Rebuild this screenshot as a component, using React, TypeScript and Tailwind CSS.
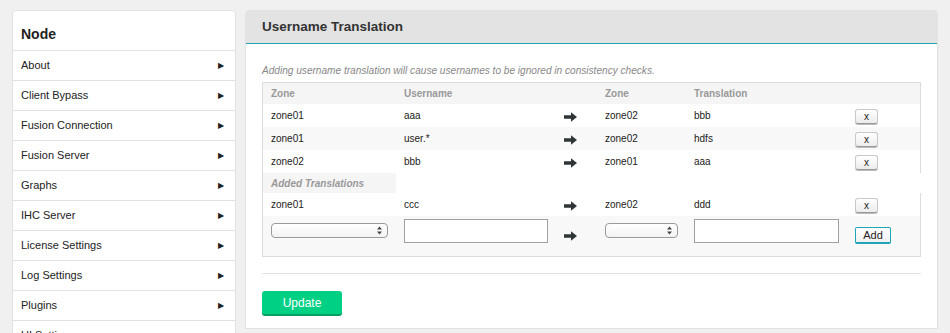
import React from "react";

const navItems = [
  "About",
  "Client Bypass",
  "Fusion Connection",
  "Fusion Server",
  "Graphs",
  "IHC Server",
  "License Settings",
  "Log Settings",
  "Plugins",
  "UI Settings",
];

const existing = [
  { zone: "zone01", user: "aaa", to: "zone02", tr: "bbb" },
  { zone: "zone01", user: "user.*", to: "zone02", tr: "hdfs" },
  { zone: "zone02", user: "bbb", to: "zone01", tr: "aaa" },
];

const cols = "grid grid-cols-[133px_160px_41px_89px_161px_1fr]";

function Arrow() {
  return (
    <svg width="13" height="10" viewBox="0 0 13 10" className="text-[#2f3537]">
      <path d="M0 3.3h7V0.2l6 4.8-6 4.8V6.7H0z" fill="currentColor" />
    </svg>
  );
}

function XButton() {
  return (
    <button className="w-[23px] h-[15px] rounded-[3px] border border-[#c8c8c8] border-b-[#999] bg-gradient-to-b from-white to-[#ececec] text-[10px] leading-none text-[#222] shadow-[0_1px_0_#bbb]">
      x
    </button>
  );
}

function FakeSelect({ w }: { w: string }) {
  return (
    <div
      className={`${w} h-[15px] rounded-[4px] border border-[#9a9a9a] bg-gradient-to-b from-white to-[#f3f3f3] flex items-center justify-end pr-[5px]`}
    >
      <svg width="5" height="9" viewBox="0 0 5 9">
        <path d="M2.5 0.5L5 3.5H0z M2.5 8.5L0 5.5h5z" fill="#444" />
      </svg>
    </div>
  );
}

function Row({
  r,
  shaded,
}: {
  r: { zone: string; user: string; to: string; tr: string };
  shaded?: boolean;
}) {
  return (
    <div
      className={`${cols} h-[23px] items-center border-r border-[#dcdcdc] ${
        shaded ? "bg-[#f8f8f8]" : "bg-white"
      }`}
    >
      <div className="pl-[8px]">{r.zone}</div>
      <div className="pl-[8px]">{r.user}</div>
      <div className="pl-[8px] pt-[2px]">
        <Arrow />
      </div>
      <div className="pl-[8px]">{r.to}</div>
      <div className="pl-[8px]">{r.tr}</div>
      <div className="pl-[8px] pt-[2px]">
        <XButton />
      </div>
    </div>
  );
}

export default function App() {
  return (
    <div
      className="w-[950px] h-[333px] overflow-hidden bg-[#f0f0f0] flex gap-[9px] pl-[12px] pt-[10px] text-[#222]"
      style={{ fontFamily: '"Liberation Sans", Arial, sans-serif' }}
    >
      {/* sidebar */}
      <aside className="w-[224px] shrink-0 bg-white border border-[#e2e2e2] rounded-t-[4px] self-start">
        <div className="h-[40px] px-[8px] pt-[13px] text-[14px] font-bold border-b border-[#e2e2e2]">
          Node
        </div>
        {navItems.map((item) => (
          <div
            key={item}
            className="h-[30px] px-[8px] flex items-center justify-between text-[11px] border-b border-[#e2e2e2]"
          >
            <span>{item}</span>
            <span className="text-[8px] text-[#222] mr-[3px]">▶</span>
          </div>
        ))}
      </aside>

      {/* main panel */}
      <section className="w-[693px] shrink-0 self-start bg-white border border-[#e2e2e2] rounded-t-[4px]">
        <header className="h-[33px] bg-[#e3e3e3] border-b border-[#1fa5b6] px-[16px] flex items-center">
          <h1 className="text-[13.5px] font-bold text-[#333]">Username Translation</h1>
        </header>

        <div className="px-[16px] pt-[19px] pb-[12px]">
          <p className="text-[10.1px] italic text-[#888] mb-[4px]">
            Adding username translation will cause usernames to be ignored in consistency checks.
          </p>

          <div className="text-[10px] border-l border-t border-b border-[#dcdcdc]">
            <div className={`${cols} h-[21px] items-center bg-[#f5f5f5] border-r border-[#dcdcdc] font-bold text-[#999]`}>
              <div className="pl-[8px]">Zone</div>
              <div className="pl-[8px]">Username</div>
              <div />
              <div className="pl-[8px]">Zone</div>
              <div className="pl-[8px]">Translation</div>
              <div />
            </div>
            {existing.map((r, i) => (
              <Row key={i} r={r} shaded={i === 1} />
            ))}
            <div className={`${cols} h-[20px] items-center`}>
              <div className="pl-[8px] h-full flex items-center bg-[#f5f5f5] font-bold italic text-[#999]">
                Added Translations
              </div>
            </div>
            <Row r={{ zone: "zone01", user: "ccc", to: "zone02", tr: "ddd" }} />
            <div className={`${cols} h-[40px] bg-[#f8f8f8] border-r border-[#dcdcdc]`}>
              <div className="pl-[8px] pt-[7px]">
                <FakeSelect w="w-[117px]" />
              </div>
              <div className="pl-[8px] pt-[3px]">
                <div className="w-[144px] h-[24px] bg-white border border-[#a0a0a0]" />
              </div>
              <div className="pl-[8px] pt-[15px]">
                <Arrow />
              </div>
              <div className="pl-[8px] pt-[7px]">
                <FakeSelect w="w-[73px]" />
              </div>
              <div className="pl-[8px] pt-[3px]">
                <div className="w-[145px] h-[24px] bg-white border border-[#a0a0a0]" />
              </div>
              <div className="pl-[8px] pt-[11px]">
                <button className="w-[36px] h-[17px] rounded-[2px] border border-[#1fa5b6] border-b-2 bg-gradient-to-b from-white to-[#f0f0f0] text-[11px] leading-none text-[#222]">
                  Add
                </button>
              </div>
            </div>
          </div>

          <div className="border-t border-[#e2e2e2] mt-[16px]" />

          <button className="mt-[17px] w-[80px] h-[25px] rounded-[3px] bg-[#00d084] border-b-2 border-[#0b9c60] text-white text-[12px]">
            Update
          </button>
        </div>
      </section>
    </div>
  );
}
